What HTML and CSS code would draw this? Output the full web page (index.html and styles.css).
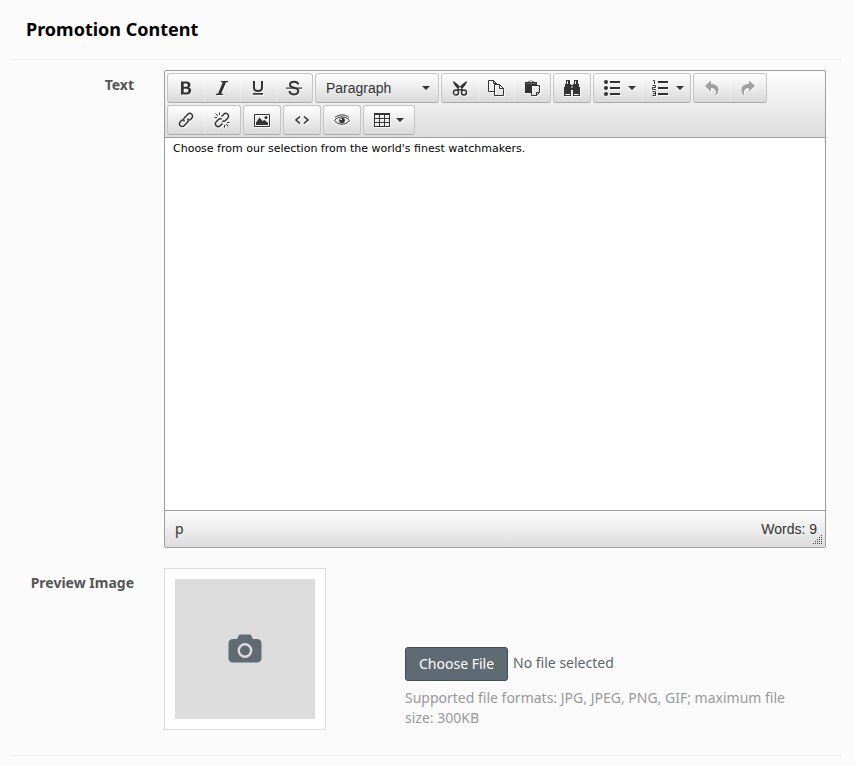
FILE: index.html
```html
<!DOCTYPE html>
<html lang="en">
<head>
<meta charset="utf-8">
<title>Promotion Content</title>
<link rel="stylesheet" href="styles.css">
</head>
<body>
<main class="panel">
  <h1 class="panel-title">Promotion Content</h1>
  <form class="fields">
    <div class="field">
      <label class="field-label" for="promo-text">Text</label>
      <div class="editor">
        <div class="toolbar" role="toolbar" aria-label="Formatting">
          <div class="group">
            <button type="button" class="tool" aria-label="Bold"><svg class="icon" viewBox="0 0 16 16"><path fill-rule="evenodd" d="M3 1.500h5.500c2.700 0 4 1.300 4 3.500 0 1.200-.6 2-1.600 2.500 1.500.5 2.300 1.700 2.300 3.100C13.200 13 11.600 14.500 9 14.500H3zM5.700 3.500v3.300h2.200c1.300 0 1.900-.6 1.900-1.600S9.200 3.500 7.900 3.500zm0 5.200v3.700h2.600c1.400 0 2.100-.7 2.100-1.900s-.7-1.800-2.100-1.800z"/></svg></button>
            <button type="button" class="tool" aria-label="Italic"><svg class="icon" viewBox="0 0 16 16"><path d="M7 1h7v1.200h-2L7.200 13.800H9V15H2v-1.200h2L8.800 2.200H7z"/></svg></button>
            <button type="button" class="tool" aria-label="Underline"><svg class="icon" viewBox="0 0 16 16"><path class="line" stroke-width="2" d="M4 1v6.500c0 2 1.500 3.500 4 3.500s4-1.500 4-3.500V1"/><path d="M3 13h10v1.700H3z"/></svg></button>
            <button type="button" class="tool" aria-label="Strikethrough"><svg class="icon" viewBox="0 0 16 16"><path class="line" stroke-width="2" d="M12.200 4.500C12 2.700 10.500 1.700 8.200 1.700 5.800 1.700 4 2.800 4 4.700c0 1.900 1.900 2.500 4 3 2.400.5 4.300 1.100 4.300 3.300 0 2.100-1.800 3.400-4.300 3.400-2.600 0-4.300-1.200-4.500-3.400"/><path d="M0 7.500h16v1.200H0z"/></svg></button>
          </div>
          <div class="group">
            <button type="button" class="tool tool-format">Paragraph<span class="caret"></span></button>
          </div>
          <div class="group">
            <button type="button" class="tool" aria-label="Cut"><svg class="icon" viewBox="0 0 16 16"><path d="M1 1c2 .4 8 6 8.800 8.500L7.600 10.500C5.500 8.800 1 4 1 1zM15 1c-2 .4-8 6-8.800 8.500l2.200 1C10.500 8.800 15 4 15 1z"/><g class="line" stroke-width="1.400"><circle cx="4" cy="12.500" r="2.500"/><circle cx="12" cy="12.500" r="2.500"/><path d="M5 9.800h6"/></g></svg></button>
            <button type="button" class="tool" aria-label="Copy"><svg class="icon" viewBox="0 0 16 16"><g class="line"><path d="M6 11.500H.5V.5h5l3 3V5M5.500.5v3h3M6.500 4.500h5l4 4v7h-9zM11.500 4.500v4h4"/></g></svg></button>
            <button type="button" class="tool" aria-label="Paste"><svg class="icon" viewBox="0 0 16 16"><path fill-rule="evenodd" d="M1 2h3v-.5h1.500C5.500 0 8.500 0 8.500 1.500H10V2h3v3h-1V3.700H2.500V4H12v1H7v8H1zM6 1v1h2V1z"/><path class="line" d="M7.500 5.500h8v7l-3 3h-5zM12.500 15.500v-3h3"/></svg></button>
          </div>
          <div class="group">
            <button type="button" class="tool" aria-label="Find"><svg class="icon" viewBox="0 0 16 16"><path d="M2 0h4v4h1v1h2V4h1V0h4v4h1v3h1v9H9V10H7v6H0V7h1V4h1z"/><path class="cut" d="M1 14h5v1H1zM10 14h5v1h-5zM3 1h1v3H3zM11 1h1v3h-1zM7.500 6h1v2h-1z"/></svg></button>
          </div>
          <div class="group">
            <button type="button" class="tool" aria-label="Bullet list"><svg class="icon" viewBox="0 0 16 16"><circle cx="2" cy="2" r="2"/><circle cx="2" cy="8" r="2"/><circle cx="2" cy="14" r="2"/><path d="M6 1h10v2H6zM6 7h10v2H6zM6 13h10v2H6z"/></svg><span class="caret"></span></button>
            <button type="button" class="tool" aria-label="Numbered list"><svg class="icon" viewBox="0 0 16 16"><path d="M6 1h10v2H6zM6 7h10v2H6zM6 13h10v2H6z"/><path class="line" d="M1 .5h1.500V4M.5 5.500h3v2h-3v2H4M.5 11.500h3v4h-3M1 13.500h2.500"/></svg><span class="caret"></span></button>
          </div>
          <div class="group">
            <button type="button" class="tool" aria-label="Undo" disabled><svg class="icon" viewBox="0 0 16 16"><path d="M1 6l6-5.500V4c5 0 7.500 2.500 7.500 6 0 2.500-1.200 4.300-3 5.500C12.800 11 11.500 8.200 7 8v3.500z"/></svg></button>
            <button type="button" class="tool" aria-label="Redo" disabled><svg class="icon" viewBox="0 0 16 16"><path d="M15 6L9 .5V4C4 4 1.500 6.500 1.500 10c0 2.500 1.200 4.300 3 5.500C3.200 11 4.500 8.200 9 8v3.500z"/></svg></button>
          </div>
          <div class="group">
            <button type="button" class="tool" aria-label="Insert link"><svg class="icon" viewBox="0 0 16 16"><g class="line" stroke-width="1.500"><path d="M6.500 9.500c-1.300-1.300-1.100-2.700 0-3.800L9.800 2.300c1.200-1.200 2.700-1.200 3.900 0s1.200 2.700 0 3.900L11.500 8.400"/><path d="M9.500 6.500c1.300 1.300 1.100 2.700 0 3.800l-3.300 3.400c-1.200 1.200-2.700 1.200-3.900 0s-1.200-2.700 0-3.900L4.500 7.600"/></g></svg></button>
            <button type="button" class="tool" aria-label="Remove link"><svg class="icon" viewBox="0 0 16 16"><g class="line" stroke-width="1.500"><path d="M7.500 4.500l2.300-2.200c1.200-1.200 2.700-1.200 3.900 0s1.200 2.700 0 3.900L11.500 8.500c-1 1-2.200 1-3.200.3"/><path d="M8.500 11.500l-2.300 2.200c-1.200 1.200-2.700 1.200-3.900 0s-1.200-2.700 0-3.900L4.500 7.500c1-1 2.200-1 3.200-.3"/></g><path class="line" d="M1.500 1.500L4 4M5.500.5v2.500M.5 5.500H3M14.500 14.500L12 12M10.500 15.500V13M15.500 10.500H13"/></svg></button>
          </div>
          <div class="group">
            <button type="button" class="tool" aria-label="Insert image"><svg class="icon" viewBox="0 0 16 16"><path class="line" d="M.5 2.500h15v12H.5z"/><path d="M2 13V10.500L5.500 5.500 8.500 9 10.500 8 14 11v2z"/><circle cx="12" cy="5.500" r="1.500"/></svg></button>
          </div>
          <div class="group">
            <button type="button" class="tool" aria-label="Source code"><svg class="icon" viewBox="0 0 16 16"><path class="line" stroke-width="1.600" d="M6 4.500L2 8l4 3.500M10 4.500L14 8l-4 3.500"/></svg></button>
          </div>
          <div class="group">
            <button type="button" class="tool" aria-label="Preview"><svg class="icon" viewBox="0 0 16 16"><path class="line" d="M.6 8.300C2.500 6 5 4.900 8 4.900s5.500 1.100 7.400 3.400C13.500 11 11 12.200 8 12.200S2.500 11 .6 8.300z"/><path class="line" d="M1 5.500C3 3.700 5.300 2.900 8 2.900s5 .8 7 2.600"/><circle cx="8" cy="8.300" r="2.900"/><circle class="cut" cx="7" cy="7.300" r="1"/></svg></button>
          </div>
          <div class="group">
            <button type="button" class="tool tool-menu" aria-label="Table"><svg class="icon" viewBox="0 0 16 16"><path fill-rule="evenodd" d="M0 1h16v14H0zM1 3v3h4V3zM6 3v3h4V3zM11 3v3h4V3zM1 7v3h4V7zM6 7v3h4V7zM11 7v3h4V7zM1 11v3h4v-3zM6 11v3h4v-3zM11 11v3h4v-3z"/></svg><span class="caret"></span></button>
          </div>
        </div>
        <textarea class="editor-body" id="promo-text" spellcheck="false">Choose from our selection from the world's finest watchmakers.</textarea>
        <div class="statusbar">
          <span class="path">p</span>
          <span>Words: 9</span>
          <svg class="grip" viewBox="0 0 10 10"><path d="M8 0h1v1H8zM6 2h1v1H6zM8 2h1v1H8zM4 4h1v1H4zM6 4h1v1H6zM8 4h1v1H8zM2 6h1v1H2zM4 6h1v1H4zM6 6h1v1H6zM8 6h1v1H8zM0 8h1v1H0zM2 8h1v1H2zM4 8h1v1H4zM6 8h1v1H6zM8 8h1v1H8z"/></svg>
        </div>
      </div>
    </div>
    <div class="field">
      <label class="field-label" for="promo-image">Preview Image</label>
      <div class="upload">
        <div class="thumb"><div class="thumb-empty">
          <svg class="camera" viewBox="0 0 34 30"><path d="M5 5h4l1.500-3C11.100.8 12 .5 13 .5h8c1 0 1.900.3 2.500 1.500L25 5h4c2.800 0 4.500 1.700 4.500 4.500v14.500c0 2.800-1.700 4.500-4.500 4.500H5C2.200 28.500.5 26.800.5 24V9.500C.5 6.700 2.200 5 5 5z"/><circle class="lens" cx="17" cy="16.500" r="6.200"/></svg>
        </div></div>
        <div class="upload-info">
          <div class="picker">
            <input class="file-input" type="file" id="promo-image" accept=".jpg,.jpeg,.png,.gif">
            <label class="file-button" for="promo-image">Choose File</label>
            <span class="file-name">No file selected</span>
          </div>
          <p class="hint">Supported file formats: JPG, JPEG, PNG, GIF; maximum file size: 300KB</p>
        </div>
      </div>
    </div>
  </form>
</main>
</body>
</html>
```
FILE: styles.css
```css
* { box-sizing: border-box; }

body {
  margin: 0;
  background: #fbfbfb;
  color: #555;
  font: 14px/20px "Noto Sans", "Open Sans", sans-serif;
}

.panel { margin: 0 14px 0 11px; }

.panel-title {
  margin: 0;
  padding: 15px 15px 16px;
  border-bottom: 1px solid #ededed;
  color: #000;
  font-size: 18px;
  line-height: 28px;
  font-weight: 700;
}

.fields {
  display: flex;
  flex-direction: column;
  gap: 20px;
  padding: 10px 15px 25px 0;
  border-bottom: 1px solid #ededed;
}

.field {
  display: grid;
  grid-template-columns: 123px minmax(0, 1fr);
  gap: 30px;
}

.field-label {
  padding-top: 5px;
  text-align: right;
  font-weight: 700;
}

.editor {
  border: 1px solid #9e9e9e;
  border-radius: 2px;
  font-family: "Liberation Sans", Arial, sans-serif;
  color: #333;
}

.toolbar {
  display: flex;
  flex-wrap: wrap;
  gap: 2px;
  padding: 2px;
  border-bottom: 1px solid #9e9e9e;
  background: linear-gradient(#fdfdfd, #ddd);
}

.group {
  display: flex;
  border: 1px solid #c5c5c5;
  border-bottom-color: #aaa;
  border-radius: 3px;
  background: linear-gradient(#fff, #d9d9d9);
}

.tool {
  display: flex;
  align-items: center;
  gap: 8px;
  height: 28px;
  margin: 0;
  padding: 0 10px;
  border: 0;
  background: none;
  color: #333;
  font: 14px/20px "Liberation Sans", Arial, sans-serif;
}

.tool + .tool { box-shadow: inset 1px 0 rgba(255, 255, 255, 0.3); }

.tool:has(.caret) { padding-right: 6px; }

.tool.tool-format {
  width: 122px;
  padding-right: 8px;
  justify-content: space-between;
}

.tool.tool-menu {
  gap: 6px;
  padding-right: 10px;
}

.tool:disabled { color: #a0a0a0; }

.icon {
  width: 16px;
  height: 16px;
  fill: currentColor;
  filter: drop-shadow(1px 1px 0 rgba(255, 255, 255, 0.8));
}

.line { fill: none; stroke: currentColor; }

.cut { fill: #eee; }

.caret {
  border: 4px solid transparent;
  border-top-color: #333;
  border-bottom: 0;
}

.editor-body {
  display: block;
  width: 100%;
  height: 372px;
  padding: 4px 8px;
  border: 0;
  outline: 0;
  resize: none;
  background: #fff;
  color: #000;
  font: 11px/14px "DejaVu Sans", Verdana, sans-serif;
}

.statusbar {
  position: relative;
  display: flex;
  justify-content: space-between;
  padding: 8px 8px 8px 10px;
  border-top: 1px solid #9e9e9e;
  background: linear-gradient(#fdfdfd, #ddd);
  font-size: 14px;
  line-height: 20px;
}

.path { font-family: "Noto Sans", "Open Sans", sans-serif; }

.grip {
  position: absolute;
  right: 2px;
  bottom: 2px;
  width: 10px;
  height: 10px;
  fill: #444;
}

.upload {
  display: flex;
  align-items: flex-end;
  gap: 79px;
}

.thumb {
  flex: none;
  padding: 10px;
  border: 1px solid #ddd;
  background: #fff;
}

.thumb-empty {
  display: grid;
  place-items: center;
  width: 140px;
  height: 140px;
  background: #dcdcdc;
}

.camera { width: 34px; height: 30px; fill: #5f6b72; }

.lens { stroke: #dcdcdc; stroke-width: 2.400; }

.upload-info { padding-right: 20px; }

.picker {
  position: relative;
  display: flex;
  gap: 5px;
  color: #5c666d;
}

.file-input { position: absolute; width: 1px; height: 1px; opacity: 0; }

.file-button {
  padding: 6px 13px;
  border: 1px solid #414b50;
  border-radius: 3px;
  background: #5f6b72;
  color: #fff;
}

.file-name { padding-top: 6px; }

.hint { margin: 7px 0 2px; color: #999; }
```
